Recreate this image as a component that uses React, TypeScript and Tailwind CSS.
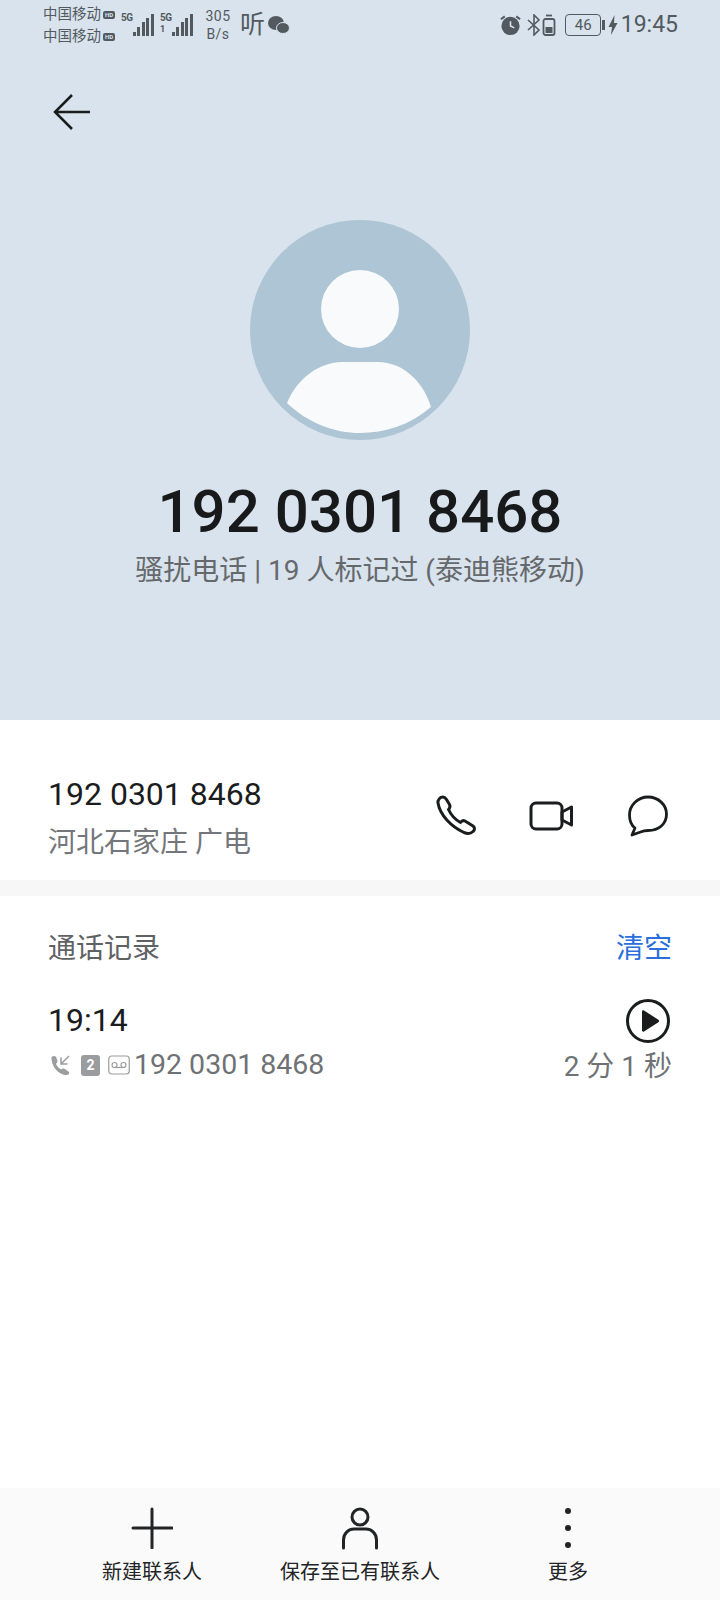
const fontStack = { fontFamily: 'Roboto, "Noto Sans CJK SC", sans-serif' }

function SignalBars({ showOne }: { showOne: boolean }) {
  const heights = [4, 9, 14, 18, 22]
  return (
    <div className="flex w-[34px] items-end gap-[1.5px]">
      <div className="relative mr-[-2px] h-[26px] w-[12px] shrink-0 font-bold leading-none text-[#525a60]">
        <span className="absolute top-[3px] left-0 text-[10px] tracking-[-0.5px]">5G</span>
        {showOne ? <span className="absolute top-[15px] left-0 text-[9px]">1</span> : null}
      </div>
      {heights.map((height) => (
        <div key={height} className="w-[3px] shrink-0 bg-[#525a60]" style={{ height }} />
      ))}
    </div>
  )
}

function HdBadge() {
  return (
    <span className="flex h-[8px] w-[12px] items-center justify-center rounded-[2px] bg-[#525a60] text-[6px] leading-none font-bold text-[#d9e3ed]">
      HD
    </span>
  )
}

function StatusBar() {
  return (
    <div className="flex h-[50px] items-start justify-between pr-[42px] pl-[43px] text-[#525a60]">
      <div className="flex items-start">
        <div className="w-[75px] pt-[4px] text-[14.500px] leading-[22px]">
          <div className="flex items-center gap-[2px]">
            中国移动
            <HdBadge />
          </div>
          <div className="flex items-center gap-[2px]">
            中国移动
            <HdBadge />
          </div>
        </div>
        <div className="mt-[10px] ml-[3px] flex gap-[5px]">
          <SignalBars showOne={false} />
          <SignalBars showOne />
        </div>
        <div className="mt-[7px] ml-[10px] w-[28px] text-center text-[14px] leading-[18px] tracking-[0.5px]">
          305
          <br />
          B/s
        </div>
        <div className="mt-[10px] ml-[8px] text-[25px] leading-[29px]">听</div>
        <svg className="mt-[15px] ml-[3px]" width="22" height="20" viewBox="0 0 22 20" fill="#525a60">
          <ellipse cx="8" cy="8" rx="8" ry="7" />
          <ellipse cx="15" cy="13" rx="6.500" ry="5.500" stroke="#d9e3ed" strokeWidth="1" />
        </svg>
      </div>
      <div className="mt-[13px] flex items-center">
        <svg width="23" height="24" viewBox="0 0 24 24" fill="#525a60">
          <circle cx="12" cy="13" r="9.500" />
          <path d="M12 8v5l4 2" fill="none" stroke="#d9e3ed" strokeWidth="1.600" />
          <path d="M2 6l4-3M22 6l-4-3" fill="none" stroke="#525a60" strokeWidth="2.200" />
        </svg>
        <svg className="ml-[5px]" width="14" height="22" viewBox="0 0 14 22" fill="none" stroke="#525a60" strokeWidth="1.600">
          <path d="M1 6l11 10-5 5V1l5 5L1 16" />
        </svg>
        <svg className="ml-[1px]" width="14" height="22" viewBox="0 0 14 22" fill="none" stroke="#525a60" strokeWidth="1.800">
          <rect x="1.500" y="5" width="11" height="16" rx="2" />
          <path d="M4 1.500h6" />
          <rect x="3.500" y="13" width="7" height="6" fill="#525a60" stroke="none" />
        </svg>
        <div className="ml-[9px] flex h-[22px] w-[36px] items-center justify-center rounded-[4px] border-[1.500px] border-[#525a60] text-[15px] leading-none">
          46
        </div>
        <div className="ml-[1px] h-[10px] w-[2.500px] bg-[#525a60]" />
        <svg className="ml-[3px]" width="10" height="22" viewBox="0 0 10 22" fill="#525a60">
          <path d="M6.500 1L0.500 13h3.500l-1 8 6.500-12H6z" />
        </svg>
        <span className="ml-[3px] text-[23px] leading-[24px]">19:45</span>
      </div>
    </div>
  )
}

function Header() {
  return (
    <header className="h-[720px] bg-[#d9e3ed]">
      <StatusBar />
      <div className="pt-[42px] pl-[52px]">
        <svg className="block" width="40" height="40" viewBox="0 0 40 40" fill="none" stroke="#1a1c1e" strokeWidth="2.500">
          <path d="M38 20H3M20 3L3 20l17 17" />
        </svg>
      </div>
      <div className="mt-[88px] flex flex-col items-center">
        <svg className="block" width="220" height="220" viewBox="0 0 220 220">
          <circle cx="110" cy="110" r="110" fill="#adc5d4" />
          <circle cx="110" cy="89" r="39" fill="#f8fafb" />
          <path
            d="M37 183C47 158 70 142 92 142H128C150 142 172 158 181 187C160 205 135 213 110 213C84 213 58 203 37 183Z"
            fill="#f8fafb"
          />
        </svg>
        <h1 className="mt-[37px] text-[60px] leading-[70px] font-medium text-[#17191b]">192 0301 8468</h1>
        <p className="mt-[6px] text-[28px] leading-[36px] text-[#66696c]">骚扰电话 | 19 人标记过 (泰迪熊移动)</p>
      </div>
    </header>
  )
}

function ContactRow() {
  return (
    <section className="flex h-[160px] items-start justify-between pt-[54px] pr-[52px] pl-[48px]">
      <div>
        <div className="text-[32px] leading-[40px] text-[#1b1c1e]">192 0301 8468</div>
        <div className="mt-[10px] text-[28px] leading-[38px] text-[#73767a]">河北石家庄 广电</div>
      </div>
      <div className="flex items-center pt-[21px]">
        <svg width="42" height="42" viewBox="0 0 42 42" fill="none" stroke="#1a1c1e" strokeWidth="3" strokeLinejoin="round">
          <path d="M2 8C1.500 5 4 2 7 2C8.500 2 9.500 3 10.500 4.500L13.500 9.500C14.500 11.500 14 13 12.500 14.500C15 20 19 24.500 24.500 27.500C25.500 26 27 25 29 26L37 31C39 32.500 39 35 37 36.500C35 38.500 31.500 39 28 37.500C15 31.500 4 20 2 8Z" />
        </svg>
        <svg className="ml-[51px]" width="46" height="30" viewBox="0 0 46 30" fill="none" stroke="#1a1c1e" strokeWidth="3" strokeLinejoin="round">
          <rect x="2" y="2" width="31" height="26" rx="5" />
          <path d="M33 11L42.500 6V24L33 19Z" />
        </svg>
        <svg className="ml-[53px]" width="40" height="42" viewBox="0 0 40 42" fill="none" stroke="#1a1c1e" strokeWidth="2.800" strokeLinejoin="round">
          <path d="M7 33C3 30 1.500 25.500 1.500 20C1.500 10 10 2 20 2C30.500 2 38.500 10 38.500 19C38.500 29 31 35.500 20 35.500C17 35.500 15 36 12.500 37L4 40Z" />
        </svg>
      </div>
    </section>
  )
}

function CallHistory() {
  return (
    <section className="px-[48px] pt-[34px]">
      <div className="flex items-center justify-between">
        <h2 className="text-[28px] leading-[38px] text-[#5f6265]">通话记录</h2>
        <button type="button" className="text-[28px] leading-[38px] text-[#2a6fdb]">
          清空
        </button>
      </div>
      <div className="mt-[31px] flex items-start justify-between">
        <div>
          <div className="text-[32px] leading-[42px] text-[#1b1c1e]">19:14</div>
          <div className="mt-[3px] flex h-[42px] items-center text-[#9a9c9e]">
            <svg className="ml-[2px]" width="21" height="22" viewBox="0 0 21 22" fill="none">
              <path d="M1.500 3C4 1 6 2 6.500 4L7.500 7C7.500 8.500 6.500 9 6 10C7 12.500 9 14.500 11 15.500C12.500 14.500 13.500 14 15 15L19 18C20 20 18 21.500 15 21C8 20 1 12 1.500 3Z" fill="currentColor" />
              <path d="M19 2L11 10M11 3.500V10H17.500" stroke="currentColor" strokeWidth="1.500" />
            </svg>
            <div className="ml-[10px] flex h-[21px] w-[19px] items-center justify-center rounded-[3px] bg-[#9a9c9e] text-[14px] leading-none font-bold text-white">
              2
            </div>
            <svg className="ml-[8px]" width="22" height="20" viewBox="0 0 22 20" fill="none" stroke="currentColor" strokeWidth="1.200">
              <rect x="0.750" y="1" width="20.500" height="18" rx="3" />
              <circle cx="6.500" cy="10" r="2.500" />
              <circle cx="15.500" cy="10" r="2.500" />
              <path d="M6.500 12.500H15.500" />
            </svg>
            <span className="ml-[4px] text-[28.500px] leading-[40px] text-[#6f7275]">192 0301 8468</span>
          </div>
        </div>
        <div className="flex flex-col items-end">
          <svg className="mt-[-1px] mr-[1px] block" width="46" height="46" viewBox="0 0 46 46">
            <circle cx="23" cy="23" r="20.500" fill="none" stroke="#1a1c1e" strokeWidth="3" />
            <path d="M17 13.500C17 12.500 18 12 19 12.500L33 21.500C34.500 22.500 34.500 23.500 33 24.500L19 33.500C18 34 17 33.500 17 32.500Z" fill="#1a1c1e" />
          </svg>
          <div className="mt-[4px] text-[28px] leading-[38px] text-[#6f7275]">2 分 1 秒</div>
        </div>
      </div>
    </section>
  )
}

function BottomBar() {
  return (
    <footer className="grid h-[112px] grid-cols-3 bg-[#fafafa] px-[48px] text-[20px] text-[#222426]">
      <div className="flex flex-col items-center">
        <svg className="mt-[19px] block" width="42" height="42" viewBox="0 0 42 42" stroke="#222426" strokeWidth="3" strokeLinecap="round">
          <path d="M21 2V41M2 21H41" />
        </svg>
        <div className="mt-[9px] leading-[28px]">新建联系人</div>
      </div>
      <div className="flex flex-col items-center">
        <svg className="mt-[18px] block" width="38" height="44" viewBox="0 0 38 44" fill="none" stroke="#222426" strokeWidth="3" strokeLinecap="round">
          <circle cx="19" cy="11" r="8" />
          <path d="M2.500 42V34C2.500 27 8 23 13 23H25C30 23 35.500 27 35.500 34V42" />
        </svg>
        <div className="mt-[8px] leading-[28px] whitespace-nowrap">保存至已有联系人</div>
      </div>
      <div className="flex flex-col items-center">
        <svg className="mt-[19px] block" width="8" height="42" viewBox="0 0 8 42" fill="#222426">
          <circle cx="4" cy="4" r="3" />
          <circle cx="4" cy="21" r="3" />
          <circle cx="4" cy="38" r="3" />
        </svg>
        <div className="mt-[9px] leading-[28px]">更多</div>
      </div>
    </footer>
  )
}

export default function App() {
  return (
    <main className="flex h-[1600px] w-[720px] flex-col overflow-hidden bg-white" style={fontStack}>
      <Header />
      <ContactRow />
      <div className="h-[16px] bg-[#f7f7f7]" />
      <div className="flex-1">
        <CallHistory />
      </div>
      <BottomBar />
    </main>
  )
}
